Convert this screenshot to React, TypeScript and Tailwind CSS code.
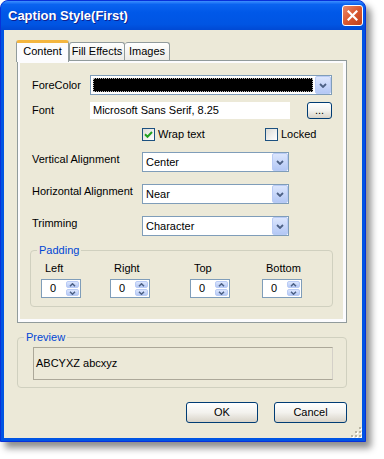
import React from "react";

function Chevron({ up = false }: { up?: boolean }) {
  return (
    <svg width="8" height="5" viewBox="0 0 8 5" className={up ? "rotate-180" : ""}>
      <path d="M1 1 L4 4 L7 1" stroke="#4D6185" strokeWidth="1.8" fill="none" />
    </svg>
  );
}

function SmallChevron({ up = false }: { up?: boolean }) {
  return (
    <svg width="7" height="4" viewBox="0 0 7 4" className={up ? "rotate-180" : ""}>
      <path d="M1 0.8 L3.5 3.2 L6 0.8" stroke="#4D6185" strokeWidth="1.5" fill="none" />
    </svg>
  );
}

function DropButton() {
  return (
    <div className="w-[16px] h-full rounded-[2px] border border-[#B9CBF5] bg-linear-to-b from-[#DCE6FD] to-[#B4C8F5] flex items-center justify-center">
      <Chevron />
    </div>
  );
}

function Combo({ value, width }: { value: string; width: string }) {
  return (
    <div className={`${width} h-[20px] border border-[#7F9DB9] bg-white flex items-stretch`}>
      <span className="flex-1 pl-[3px] flex items-center">{value}</span>
      <DropButton />
    </div>
  );
}

function Spinner() {
  return (
    <div className="w-[40px] h-[19px] border border-[#7F9DB9] bg-white flex items-stretch">
      <span className="flex-1 pl-[8px] flex items-center">0</span>
      <div className="w-[14px] flex flex-col gap-[1px] py-[1px] pr-[1px]">
        <div className="flex-1 rounded-[2px] border border-[#B9CBF5] bg-linear-to-b from-[#DCE6FD] to-[#B4C8F5] flex items-center justify-center">
          <SmallChevron up />
        </div>
        <div className="flex-1 rounded-[2px] border border-[#B9CBF5] bg-linear-to-b from-[#DCE6FD] to-[#B4C8F5] flex items-center justify-center">
          <SmallChevron />
        </div>
      </div>
    </div>
  );
}

function CheckBox({ checked }: { checked: boolean }) {
  return (
    <div className="w-[13px] h-[13px] border border-[#1C5180] bg-linear-to-br from-[#DCDCD7] to-white flex items-center justify-center">
      {checked && (
        <svg width="9" height="9" viewBox="0 0 9 9">
          <path d="M1 4.2 L3.5 6.7 L8 2" stroke="#21A121" strokeWidth="2" fill="none" />
        </svg>
      )}
    </div>
  );
}

function XPButton({ label, width, height }: { label: string; width: string; height: string }) {
  return (
    <div
      className={`${width} ${height} rounded-[3px] border border-[#003C74] bg-linear-to-b from-white via-[#F3F2EE] to-[#D8D3C8] flex items-center justify-center`}
    >
      {label}
    </div>
  );
}

function GroupBox({
  label,
  className,
  children,
}: {
  label: string;
  className: string;
  children?: React.ReactNode;
}) {
  return (
    <div className={`relative rounded-[4px] border border-[#D0D0BF] ${className}`}>
      <span className="absolute -top-[7px] left-[6px] px-[2px] bg-[#ECE9D8] text-[#0046D5]">{label}</span>
      {children}
    </div>
  );
}

function CloseButton() {
  return (
    <div className="w-[21px] h-[21px] rounded-[3px] border border-white bg-linear-to-br from-[#E8896A] via-[#D9582F] to-[#C0401C] flex items-center justify-center">
      <svg width="11" height="11" viewBox="0 0 11 11">
        <path d="M1.5 1.5 L9.5 9.5 M9.5 1.5 L1.5 9.5" stroke="white" strokeWidth="2.2" strokeLinecap="square" />
      </svg>
    </div>
  );
}

function Grip() {
  const dots = [
    [8, 0],
    [4, 4],
    [8, 4],
    [0, 8],
    [4, 8],
    [8, 8],
  ];
  return (
    <svg width="11" height="11" viewBox="0 0 11 11">
      {dots.map(([x, y], i) => (
        <g key={i}>
          <rect x={x + 1} y={y + 1} width="2" height="2" fill="white" />
          <rect x={x} y={y} width="2" height="2" fill="#B8B4A3" />
        </g>
      ))}
    </svg>
  );
}

export default function App() {
  return (
    <div className="w-[384px] h-[459px] bg-white font-['Liberation_Sans',Arial,sans-serif] text-[11px] leading-[13px] text-black">
      <div className="w-[366px] h-[442px] flex flex-col rounded-t-[8px] border border-[#0831D9] bg-[#0054E3] shadow-[5px_6px_7px_rgba(0,0,0,0.45)] overflow-hidden">
        {/* Title bar */}
        <div className="h-[29px] shrink-0 flex items-center justify-between pl-[7px] pr-[2px] bg-[linear-gradient(to_bottom,#3D8FFF_0%,#0A63F0_12%,#0058E8_40%,#0055E3_80%,#0049D4_100%)]">
          <span className="text-white font-bold text-[13px] leading-[16px] [text-shadow:1px_1px_0_#0F1F8F]">
            Caption Style(First)
          </span>
          <CloseButton />
        </div>

        {/* Client area */}
        <div className="flex-1 mx-[3px] mb-[3px] bg-[#ECE9D8] relative flex flex-col">
          {/* Tab control */}
          <div className="ml-[13px] mt-[10px] w-[330px] flex flex-col">
            <div className="h-[21px] flex items-end relative z-10">
              <div className="w-[53px] h-[22px] -ml-[1px] -mb-[1px] rounded-t-[3px] border-x border-[#919B9C] border-t-[3px] border-t-[#F4B63F] bg-[#FCFCFE] flex items-center justify-center pb-[2px]">
                Content
              </div>
              <div className="w-[56px] h-[18px] mb-[1px] rounded-t-[3px] border-x border-t border-[#919B9C] bg-linear-to-b from-white to-[#ECEBE6] flex items-center justify-center">
                Fill Effects
              </div>
              <div className="w-[45px] h-[18px] mb-[1px] rounded-t-[3px] border-r border-t border-[#919B9C] bg-linear-to-b from-white to-[#ECEBE6] flex items-center justify-center">
                Images
              </div>
            </div>
            <div className="h-[263px] -mt-[1px] border border-[#919B9C] bg-[#FCFCFE] pt-[2px] pl-[2px] pr-[3px] pb-[3px] flex">
              <div className="flex-1 bg-[#ECE9D8] pl-[12px] pt-[12px] flex flex-col">
                {/* ForeColor */}
                <div className="flex items-center h-[20px]">
                  <span className="w-[58px]">ForeColor</span>
                  <div className="w-[242px] h-[20px] border border-[#7F9DB9] bg-white flex items-stretch">
                    <div className="flex-1 m-[2px] bg-black border border-dotted border-[#BBBBBB]" />
                    <DropButton />
                  </div>
                </div>
                {/* Font */}
                <div className="flex items-center h-[17px] mt-[7px]">
                  <span className="w-[58px]">Font</span>
                  <div className="w-[200px] h-[17px] bg-white pl-[3px] flex items-center">
                    Microsoft Sans Serif, 8.25
                  </div>
                  <div className="ml-[17px]">
                    <XPButton label="..." width="w-[25px]" height="h-[17px]" />
                  </div>
                </div>
                {/* Checkboxes */}
                <div className="flex items-center h-[13px] mt-[9px] pl-[110px]">
                  <div className="w-[123px] flex items-center">
                    <CheckBox checked />
                    <span className="ml-[3px]">Wrap text</span>
                  </div>
                  <div className="flex items-center">
                    <CheckBox checked={false} />
                    <span className="ml-[3px]">Locked</span>
                  </div>
                </div>
                {/* Vertical alignment */}
                <div className="flex items-start mt-[11px]">
                  <span className="w-[110px] pt-[1px]">Vertical Alignment</span>
                  <Combo value="Center" width="w-[147px]" />
                </div>
                <div className="flex items-start mt-[12px]">
                  <span className="w-[110px] pt-[1px]">Horizontal Alignment</span>
                  <Combo value="Near" width="w-[147px]" />
                </div>
                <div className="flex items-start mt-[12px]">
                  <span className="w-[110px] pt-[1px]">Trimming</span>
                  <Combo value="Character" width="w-[147px]" />
                </div>
                {/* Padding group */}
                <GroupBox label="Padding" className="mt-[14px] -ml-[2px] w-[303px] h-[57px] pt-[11px] pl-[10px] flex">
                  {[
                    ["Left", "w-[69px]"],
                    ["Right", "w-[80px]"],
                    ["Top", "w-[72px]"],
                    ["Bottom", "w-[60px]"],
                  ].map(([l, w]) => (
                    <div key={l} className={`${w} flex flex-col`}>
                      <span className="pl-[4px]">{l}</span>
                      <div className="mt-[4px]">
                        <Spinner />
                      </div>
                    </div>
                  ))}
                </GroupBox>
              </div>
            </div>
          </div>

          {/* Preview */}
          <GroupBox label="Preview" className="ml-[13px] mt-[14px] w-[330px] h-[51px] pt-[9px] pl-[15px] pr-[13px]">
            <div className="h-[33px] border border-[#ACA899] border-r-[#D4D0C8] pl-[2px] flex items-center">
              ABCYXZ abcxyz
            </div>
          </GroupBox>

          {/* Buttons */}
          <div className="mt-[14px] flex justify-end gap-[16px] pr-[15px]">
            <XPButton label="OK" width="w-[72px]" height="h-[21px]" />
            <XPButton label="Cancel" width="w-[73px]" height="h-[21px]" />
          </div>

          <div className="absolute right-[0px] bottom-[0px]">
            <Grip />
          </div>
        </div>
      </div>
    </div>
  );
}
